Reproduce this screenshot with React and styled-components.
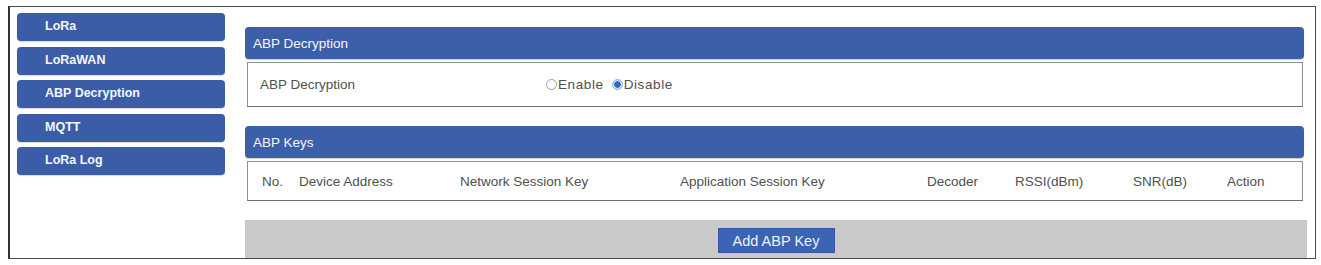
import styled, { createGlobalStyle } from "styled-components"

const Global = createGlobalStyle`
  body {
    margin: 0;
    background: #ffffff;
    font-family: "Liberation Sans", Arial, sans-serif;
  }
`

const Frame = styled.div`
  box-sizing: border-box;
  margin: 6px 0 0 8px;
  width: 1308px;
  height: 253px;
  border: 1px solid #4a4a4a;
  border-left: 2px solid #333;
  display: flex;
  align-items: flex-start;
  padding: 6px 0 0 7px;
  overflow: hidden;
`

const Sidebar = styled.nav`
  width: 208px;
  display: flex;
  flex-direction: column;
  gap: 5.5px;
  flex-shrink: 0;
`

const NavButton = styled.div`
  box-sizing: border-box;
  height: 28px;
  background: #3b5da8;
  border-radius: 4px;
  color: #f4f6fb;
  font-weight: bold;
  font-size: 12.5px;
  padding-left: 28px;
  line-height: 26px;
  box-shadow: 0 1px 1px rgba(0, 0, 0, 0.15);
`

const Main = styled.main`
  margin-left: 20px;
  width: 1062px;
  padding-top: 14px;
  display: flex;
  flex-direction: column;
`

const Header = styled.div`
  height: 32px;
  margin-top: ${(p) => p.$top || 0}px;
  margin-right: 3px;
  background: #3c5fa9;
  border-radius: 4px;
  color: #f4f6fb;
  font-size: 13.5px;
  display: flex;
  align-items: center;
  padding-left: 8px;
  box-shadow: 0 1px 1px rgba(0, 0, 0, 0.2);
`

const Box = styled.div`
  box-sizing: border-box;
  height: ${(p) => p.$h}px;
  margin: 3px 4px 0 2px;
  border: 1px solid #8f8f8f;
  border-bottom-color: #6f6f6f;
  background: #ffffff;
  color: #505050;
  font-size: 13.5px;
  display: flex;
  align-items: center;
`

const Label = styled.div`
  width: 286px;
  padding-left: 12px;
  flex-shrink: 0;
`

const RadioGroup = styled.div`
  display: flex;
  align-items: center;
  font-size: 13.5px;
  letter-spacing: 0.6px;
`

const RadioCircle = styled.span`
  box-sizing: border-box;
  width: 11px;
  height: 11px;
  border-radius: 50%;
  border: 1px solid ${(p) => (p.$on ? "#8fb0e6" : "#a0a0a0")};
  background: ${(p) => (p.$on ? "radial-gradient(circle, #3467c8 0 3px, #cfe0fb 3.5px)" : "#ffffff")};
  margin-right: 1px;
  margin-left: ${(p) => (p.$gap ? 8 : 0)}px;
`

const KeyGrid = styled.div`
  display: grid;
  grid-template-columns: 37px 161px 220px 247px 88px 118px 94px auto;
  padding-left: 14px;
  width: 100%;
`

const AddBar = styled.div`
  height: 46px;
  margin-top: 19px;
  background: #c9c9c9;
  display: flex;
  justify-content: center;
  padding-top: 8px;
  box-sizing: border-box;
`

const AddButton = styled.div`
  width: 117px;
  height: 25px;
  background: #3d63b4;
  color: #eef2fa;
  font-size: 14.5px;
  display: flex;
  align-items: center;
  justify-content: center;
  border: 1px solid #33589f;
  box-sizing: border-box;
`

const navItems = ["LoRa", "LoRaWAN", "ABP Decryption", "MQTT", "LoRa Log"]
const columns = ["No.", "Device Address", "Network Session Key", "Application Session Key", "Decoder", "RSSI(dBm)", "SNR(dB)", "Action"]

const App = () => {
  return (
    <>
      <Global />
      <Frame>
        <Sidebar>
          {navItems.map((n) => (
            <NavButton key={n}>{n}</NavButton>
          ))}
        </Sidebar>
        <Main>
          <Header>ABP Decryption</Header>
          <Box $h={45}>
            <Label>ABP Decryption</Label>
            <RadioGroup>
              <RadioCircle />
              Enable
              <RadioCircle $on $gap />
              Disable
            </RadioGroup>
          </Box>
          <Header $top={19}>ABP Keys</Header>
          <Box $h={40}>
            <KeyGrid>
              {columns.map((c) => (
                <span key={c}>{c}</span>
              ))}
            </KeyGrid>
          </Box>
          <AddBar>
            <AddButton>Add ABP Key</AddButton>
          </AddBar>
        </Main>
      </Frame>
    </>
  )
}

export default App
